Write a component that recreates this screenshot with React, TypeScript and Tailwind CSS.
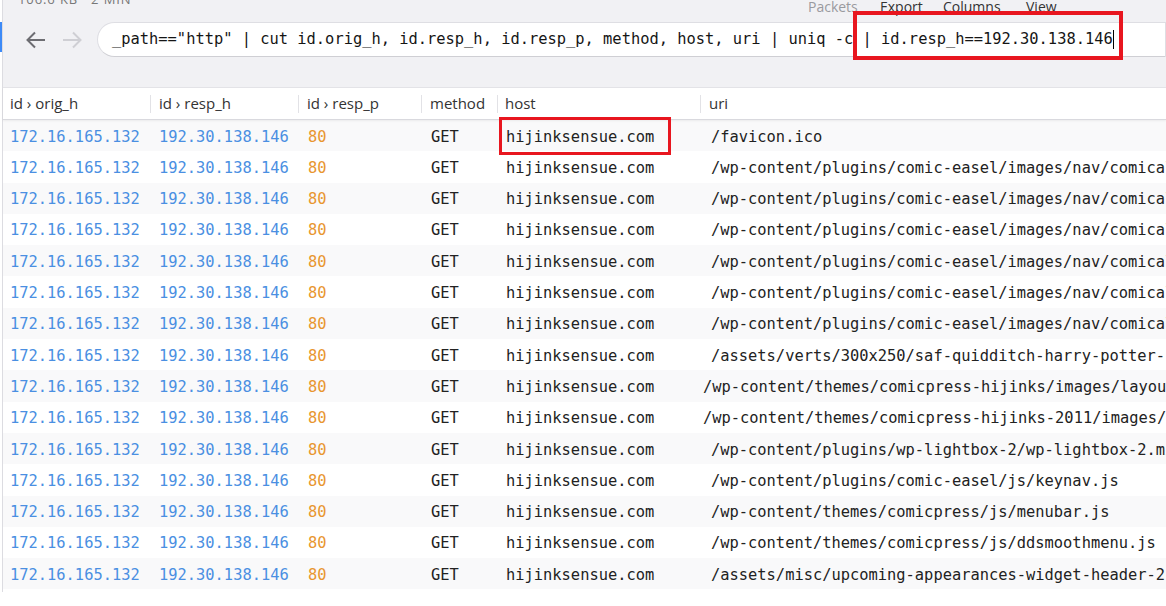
import React from "react";

interface Row {
  orig: string;
  resp: string;
  port: string;
  method: string;
  host: string;
  uri: string;
  indent?: string;
}

const mono = { fontFamily: '"DejaVu Sans Mono", "Liberation Mono", monospace' };
const sans = { fontFamily: '"Open Sans", "Noto Sans", sans-serif' };

const uris = [
  "/favicon.ico",
  "/wp-content/plugins/comic-easel/images/nav/comical/prev.png",
  "/wp-content/plugins/comic-easel/images/nav/comical/next.png",
  "/wp-content/plugins/comic-easel/images/nav/comical/first.png",
  "/wp-content/plugins/comic-easel/images/nav/comical/last.png",
  "/wp-content/plugins/comic-easel/images/nav/comical/random.png",
  "/wp-content/plugins/comic-easel/images/nav/comical/archive.png",
  "/assets/verts/300x250/saf-quidditch-harry-potter-rpg.jpg",
  "/wp-content/themes/comicpress-hijinks/images/layout/header.png",
  "/wp-content/themes/comicpress-hijinks-2011/images/icons.png",
  "/wp-content/plugins/wp-lightbox-2/wp-lightbox-2.min.js",
  "/wp-content/plugins/comic-easel/js/keynav.js",
  "/wp-content/themes/comicpress/js/menubar.js",
  "/wp-content/themes/comicpress/js/ddsmoothmenu.js",
  "/assets/misc/upcoming-appearances-widget-header-2.png",
];

const rows: Row[] = uris.map((uri, i) => ({
  orig: "172.16.165.132",
  resp: "192.30.138.146",
  port: "80",
  method: "GET",
  host: "hijinksensue.com",
  uri,
  indent: i === 8 || i === 9 ? "pl-[2px]" : "pl-[10px]",
}));

function Arrow({ dir, color }: { dir: "left" | "right"; color: string }) {
  return (
    <svg width="22" height="20" viewBox="0 0 22 20" fill="none">
      {dir === "left" ? (
        <path d="M20 10H3M10 2.5L2.5 10L10 17.5" stroke={color} strokeWidth="2" />
      ) : (
        <path d="M2 10H19M12 2.5L19.5 10L12 17.5" stroke={color} strokeWidth="2" />
      )}
    </svg>
  );
}

function Separator() {
  return <div className="w-px h-[18px] bg-[#e2e2e6] shrink-0" />;
}

export default function App() {
  return (
    <div className="w-[1166px] h-[606px] overflow-hidden bg-white pl-[2px] relative">
      {/* active tab marker */}
      <div className="absolute left-0 top-[22px] w-[2px] h-[30px] bg-[#3d8af7]" />

      <div className="border-l border-[#dcdce1] h-[592px] relative">
        {/* Top bar */}
        <div className="h-[88px] bg-[#f1f1f4] border-b border-[#e4e4e8] flex flex-col overflow-hidden">
          <div className="flex items-center h-[20px] -mt-[4px] text-[14px]" style={sans}>
            <div className="ml-[15px] -mt-[13px] text-[13px] tracking-[0.07em] text-[#777]">106.6 KB · 2 MIN</div>
            <div className="ml-auto flex items-center text-[#333]">
              <span className="w-[72px] text-[#9a9a9f]">Packets</span>
              <span className="w-[63px]">Export</span>
              <span className="w-[83px]">Columns</span>
              <span className="w-[140px]">View</span>
            </div>
          </div>
          <div className="flex items-center h-[35px] mt-[6px]">
            <div className="flex items-center gap-[14px] ml-[22px] w-[72px]">
              <Arrow dir="left" color="#6d6d72" />
              <Arrow dir="right" color="#cfcfd4" />
            </div>
            <div
              className="flex-1 h-[35px] bg-white rounded-l-full border border-[#dedee3] border-b-[#cfcfd4] flex items-center pl-[14px] text-[15.4px] text-[#151515] whitespace-nowrap"
              style={mono}
            >
              <span>_path=="http" | cut id.orig_h, id.resp_h, id.resp_p, method, host, uri | uniq -c | id.resp_h==192.30.138.146</span>
              <span className="w-px h-[19px] bg-black" />
            </div>
          </div>
        </div>

        {/* Column header */}
        <div
          className="flex items-center h-[32px] bg-white border-b border-[#d9d9de] shadow-[0_1px_2px_rgba(0,0,0,0.06)] text-[15px] text-[#333] whitespace-nowrap relative z-10"
          style={sans}
        >
          <div className="w-[147px] pl-[7px] shrink-0">id › orig_h</div>
          <Separator />
          <div className="w-[147px] pl-[8px] shrink-0">id › resp_h</div>
          <Separator />
          <div className="w-[122px] pl-[8px] shrink-0">id › resp_p</div>
          <Separator />
          <div className="w-[75px] pl-[8px] shrink-0">method</div>
          <Separator />
          <div className="w-[202px] pl-[7px] shrink-0">host</div>
          <Separator />
          <div className="pl-[8px]">uri</div>
        </div>

        {/* Rows */}
        <div className="text-[15.4px] whitespace-nowrap" style={mono}>
          {rows.map((r, i) => (
            <div
              key={i}
              className={`flex items-center h-[31.3px] pt-[3px] ${i % 2 === 0 ? "bg-[#f9f9fa]" : "bg-white"}`}
            >
              <div className="w-[148px] pl-[7px] shrink-0 text-[#4a8fe2]">{r.orig}</div>
              <div className="w-[148px] pl-[8px] shrink-0 text-[#4a8fe2]">{r.resp}</div>
              <div className="w-[123px] pl-[9px] shrink-0 text-[#e8962f]">{r.port}</div>
              <div className="w-[76px] pl-[9px] shrink-0 text-[#222]">{r.method}</div>
              <div className="w-[203px] pl-[8px] shrink-0 text-[#222]">{r.host}</div>
              <div className={`${r.indent} text-[#222]`}>{r.uri}</div>
            </div>
          ))}
        </div>

        {/* annotation boxes */}
        <div className="absolute left-[850px] top-[11px] w-[270px] h-[49px] border-[4px] border-[#e8161f] pointer-events-none" />
        <div className="absolute left-[496px] top-[117px] w-[172px] h-[38px] border-[3px] border-[#e8161f] pointer-events-none z-20" />
      </div>
    </div>
  );
}
